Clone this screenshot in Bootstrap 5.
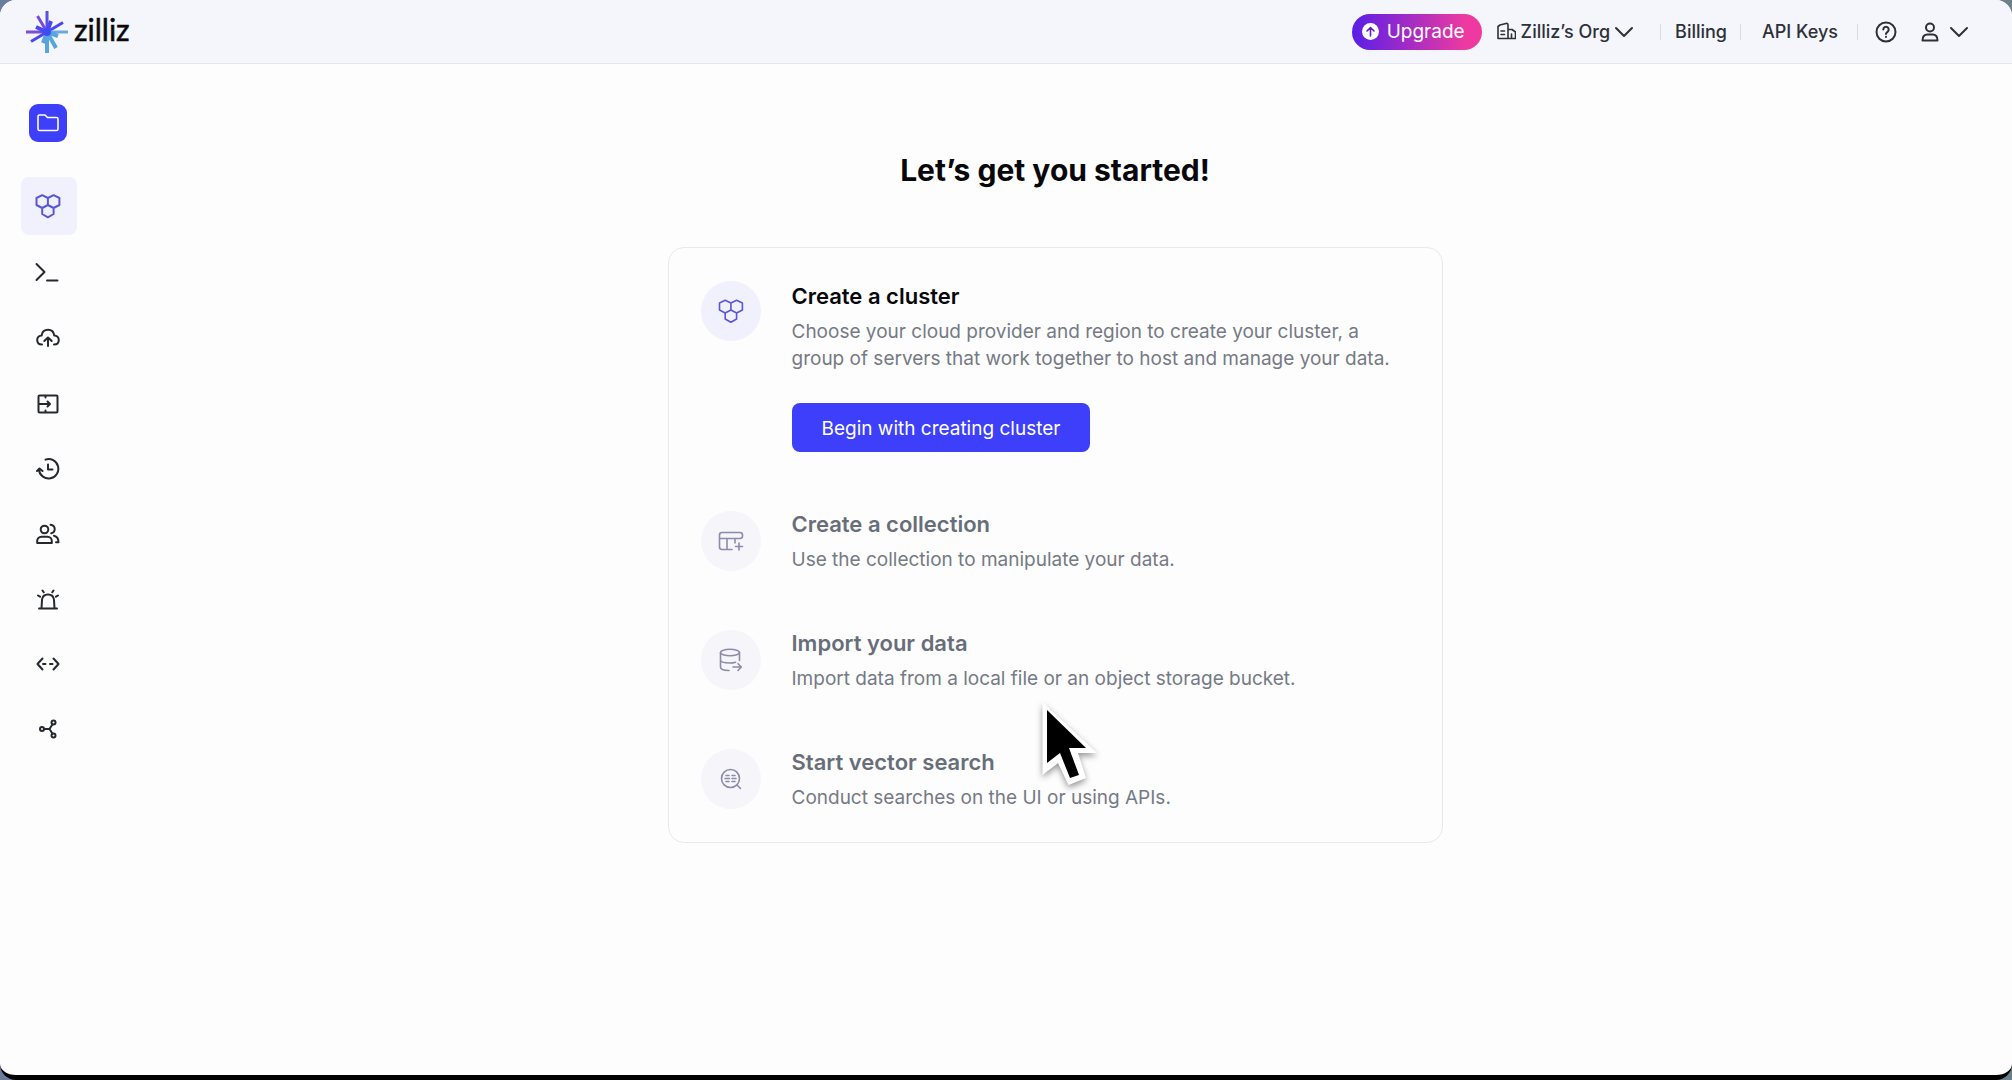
<!DOCTYPE html>
<html lang="en">
<head>
<meta charset="utf-8">
<meta name="viewport" content="width=device-width, initial-scale=1">
<title>Zilliz Cloud</title>
<link href="https://cdn.jsdelivr.net/npm/bootstrap@5.3.0/dist/css/bootstrap.min.css" rel="stylesheet">
<style>
  body { font-family: Inter, "Liberation Sans", sans-serif; background: linear-gradient(90deg, #6c7c9c, #6b8088); color: #2c3138; }
  .app-window { background: #fdfdfe; border-radius: 16px; border-bottom: 5px solid #000; overflow: hidden; }
  .topbar { height: 64px; background: #f5f6fb; border-bottom: 1px solid #e3e6ec; padding: 0 44px 0 26px; }
  .topbar svg, .side-link svg, .step-icon svg, .project-btn svg { fill: none; stroke: currentColor; stroke-width: 2; stroke-linecap: round; stroke-linejoin: round; flex: none; }
  .topbar svg.thin, .project-btn svg.thin, .step-icon svg { stroke-width: 1.6; }
  .brand { font: 400 30px/40px Lato, sans-serif; color: #0a0a0c; gap: 6px; }
  .brand-name { padding-bottom: 6px; -webkit-text-stroke: 0.5px #0a0a0c; }
  .upgrade { height: 36px; padding: 0 17px 0 10px; gap: 8px; font-size: 19px; line-height: 36px; background: linear-gradient(90deg, #5a1ee8, #ee3aa0 88%); }
  .top-link { font-size: 18px; line-height: 28px; font-weight: 500; color: #2c3138; }
  .org-link { margin-left: 15px; gap: 5px; }
  .divider { width: 1px; height: 16px; background: #d9dbe2; }
  .gap-org { margin: 0 14px 0 27px; }
  .gap-bill { margin: 0 21px 0 13px; }
  .gap-api { margin: 0 17px 0 19px; }
  .account { margin-left: 24px; gap: 11px; }
  .sidebar { width: 98px; padding: 40px 0 0 21px; }
  .project-btn { width: 38px; height: 38px; border-radius: 9px; background: #3d3ffb; margin: 0 0 35px 8px; }
  .side-link { width: 56px; height: 58px; border-radius: 8px; color: #25292f; padding-right: 2px; }
  .side-link.active { background: #f1f0fd; color: #5a57d6; }
  .list-a { gap: 8px; }
  .list-b { gap: 7px; margin-top: 7px; }
  .page-main { padding: 86px 24px 96px; }
  .page-title { font-size: 30px; line-height: 40px; font-weight: 700; color: #08080a; margin-bottom: 57px; }
  .steps { width: 100%; max-width: 775px; border: 1px solid #e8e9ee; border-radius: 16px; padding: 33px 32px 31px; gap: 55px; }
  .step { gap: 31px; }
  .step-icon { width: 60px; height: 60px; margin-top: 2px; background: #f5f5fa; color: #8d8aab; }
  .step-icon.current { margin-top: 0; background: #f1f0fd; color: #5a57d6; }
  .step-title { font-size: 22px; line-height: 30px; font-weight: 600; margin-bottom: 7px; color: #686e79; }
  .step-title.current { color: #08080a; }
  .step-text { font-size: 19px; line-height: 27px; color: #757a84; }
  .begin-btn { height: 49px; padding: 2px 30px 0; border-radius: 8px; margin: 31px 0 2px; background: #3d3ffb; color: #fff; font-size: 19px; line-height: 27px; }
  .begin-btn:hover { background: #3234e0; color: #fff; }
  .pointer { left: 371px; top: 453px; filter: drop-shadow(0 3px 3px rgba(0,0,0,.4)); pointer-events: none; }
</style>
<script src="https://cdn.jsdelivr.net/npm/bootstrap@5.3.0/dist/js/bootstrap.bundle.min.js"></script>
</head>
<body>
<svg class="d-none" aria-hidden="true">
  <symbol id="cluster" viewBox="0 0 26 26">
    <path d="M7.2 2.2 12.9 5v7L7.2 15 1.5 12V5zM18.6 2.2 24.4 5v7l-5.8 3-5.7-3V5zM7.2 15l5.7-3 5.700 3v6l-5.700 3.300L7.200 21z"/>
  </symbol>
</svg>
<div class="app-window min-vh-100 d-flex flex-column">
  <header class="topbar d-flex align-items-center">
    <a href="#" class="brand d-flex align-items-center text-decoration-none me-auto">
      <svg width="42" height="42" viewBox="0 0 42 42">
        <g stroke-width="3" stroke-linecap="butt">
          <path stroke="#5a4fe8" d="M21 21V0"/>
          <path stroke="#7d4bdc" d="M21 21 11.500 5M21 21H0"/>
          <path stroke="#4a49f0" d="M21 21 5 30.500M21 21l16-9.500"/>
          <path stroke="#4a49f0" stroke-width="4" d="M21 21l4-11M21 21 10 16"/>
          <path stroke="#6aa9dc" d="M21 21h21"/>
          <path stroke="#58a5dc" stroke-width="4" d="M21 21v21M21 21l9 16M21 21l-4 11M21 21l11 4"/>
        </g>
        <circle cx="21" cy="21" r="4" fill="#3f4cf5" stroke="none"/>
      </svg>
      <span class="brand-name">zilliz</span>
    </a>
    <button type="button" class="upgrade btn border-0 rounded-pill text-white d-flex align-items-center">
      <svg width="17" height="17" viewBox="0 0 17 17" class="thin"><circle cx="8.500" cy="8.500" r="8.500" fill="#fff" stroke="none"/><path stroke="#5a22c8" d="M8.500 13V4.500M5 8l3.500-3.500L12 8"/></svg>
      Upgrade
    </button>
    <button type="button" class="top-link org-link btn border-0 p-0 d-flex align-items-center">
      <svg width="19" height="19" viewBox="0 0 19 19" class="thin"><path d="M1 16.500V4.500L3 3l6-1.500q2-.5 2 1.500v13.500M1 16.500h17.500v-6.500L15 7.500h-4M4 9h3.500M4 12.500h3.500M14.500 12v4.500"/></svg>
      Zilliz’s Org
      <svg width="18" height="12" viewBox="0 0 18 12"><path d="M1 2l8 8 8-8"/></svg>
    </button>
    <span class="divider gap-org"></span>
    <a href="#" class="top-link text-decoration-none">Billing</a>
    <span class="divider gap-bill"></span>
    <a href="#" class="top-link text-decoration-none">API Keys</a>
    <span class="divider gap-api"></span>
    <button type="button" class="top-link btn border-0 p-0 d-flex" aria-label="Help">
      <svg width="22" height="22" viewBox="0 0 22 22"><circle cx="11" cy="11" r="9.500"/><path d="M8.300 8.500a2.700 2.700 0 1 1 4.200 2.300c-1 .7-1.500 1.200-1.500 2.200M11 15.800v.2"/></svg>
    </button>
    <button type="button" class="top-link btn border-0 p-0 d-flex align-items-center account" aria-label="Account">
      <svg width="18" height="20" viewBox="0 0 18 20"><circle cx="9" cy="5.500" r="4"/><path d="M1.500 18.500c0-4 2-6 5-6h5c3 0 5 2 5 6z"/></svg>
      <svg width="18" height="12" viewBox="0 0 18 12"><path d="M1 2l8 8 8-8"/></svg>
    </button>
  </header>
  <div class="d-flex flex-grow-1">
    <nav class="sidebar flex-shrink-0" aria-label="Project">
      <button type="button" class="project-btn btn border-0 p-0 text-white d-flex align-items-center justify-content-center" aria-label="Projects">
        <svg width="24" height="20" viewBox="0 0 24 20" class="thin"><path d="M2 3.500Q2 2 3.500 2H9l2.500 2.500h9Q22 4.500 22 6v10q0 1.500-1.500 1.500h-17Q2 17.500 2 16z"/></svg>
      </button>
      <div class="list-a d-flex flex-column">
        <a href="#" class="side-link active d-flex align-items-center justify-content-center" aria-label="Clusters" aria-current="page"><svg width="26" height="26"><use href="#cluster"/></svg></a>
        <a href="#" class="side-link d-flex align-items-center justify-content-center" aria-label="Console"><svg width="26" height="22" viewBox="0 0 26 22"><path d="M1.500 3l8 8-8 8M12 19.500h10.500"/></svg></a>
        <a href="#" class="side-link d-flex align-items-center justify-content-center" aria-label="Migrations"><svg width="24" height="20" viewBox="0 0 24 20"><path d="M6 16.500C3 16.500 1.200 14.600 1.200 12s2-4.600 4.500-4.600C6 4 8.500 1.800 12 1.800s5.800 2.200 6.200 5.600c2.600 0 4.600 2 4.600 4.600s-1.800 4.500-4.800 4.500M12 18V9.500M8.300 13 12 9.500l3.700 3.500"/></svg></a>
        <a href="#" class="side-link d-flex align-items-center justify-content-center" aria-label="Imports"><svg width="22" height="20" viewBox="0 0 22 20"><path d="M8.500 1.500v2M8.500 18.500v-2M2.500 1.500h17q1 0 1 1v15q0 1-1 1h-17q-1 0-1-1v-15q0-1 1-1zM1.500 10H13M10.500 7.500 13 10l-2.500 2.500"/></svg></a>
      </div>
      <div class="list-b d-flex flex-column">
        <a href="#" class="side-link d-flex align-items-center justify-content-center" aria-label="Backups"><svg width="24" height="22" viewBox="0 0 24 22"><path d="M9.500 1.600A9.700 9.700 0 1 1 3 12M1 13l2.500-2.500L6.500 13M12 6.500v5h4.500"/></svg></a>
        <a href="#" class="side-link d-flex align-items-center justify-content-center" aria-label="Users"><svg width="24" height="22" viewBox="0 0 24 22"><circle cx="8.500" cy="6.500" r="3.800"/><path d="M1.200 20v-2c0-2.500 1.800-4.300 4.300-4.300h6c2.500 0 4.300 1.800 4.300 4.300v2zM14.500 1.700c2.800.4 4.200 2 4.200 4.300s-1.200 3.800-3.500 4.300M18 12.700c3 .7 4.500 2.500 4.500 6.500H20"/></svg></a>
        <a href="#" class="side-link d-flex align-items-center justify-content-center" aria-label="Alerts"><svg width="22" height="21" viewBox="0 0 22 21"><path d="M2 19.500h18M4.500 19.500 5 11Q5.500 5.500 11 5.500t6 5.500l.5 8.500M5.500 1.500l1.200 1.800M16.500 1.500l-1.200 1.800M1 6.500l2 1.200M21 6.500l-2 1.200"/></svg></a>
        <a href="#" class="side-link d-flex align-items-center justify-content-center" aria-label="API"><svg width="24" height="14" viewBox="0 0 24 14"><path d="M6.500 1.500 1.500 7l5 5.500M17.500 1.500l5 5.500-5 5.500M7 7h2.500M14 7h2.500"/></svg></a>
        <a href="#" class="side-link d-flex align-items-center justify-content-center" aria-label="Integrations"><svg width="18" height="20" viewBox="0 0 18 20"><circle cx="3" cy="10" r="2"/><circle cx="14.500" cy="3.500" r="2"/><circle cx="14.500" cy="16.500" r="2"/><path d="M5 10h5.500l3-4.800M10.500 10l3 4.800"/></svg></a>
      </div>
    </nav>
    <main class="page-main flex-grow-1 d-flex flex-column align-items-center">
      <h1 class="page-title text-center">Let’s get you started!</h1>
      <section class="steps position-relative d-flex flex-column">
        <div class="step d-flex">
          <div class="step-icon current rounded-circle flex-shrink-0 d-flex align-items-center justify-content-center"><svg width="26" height="26"><use href="#cluster"/></svg></div>
          <div>
            <h2 class="step-title current">Create a cluster</h2>
            <p class="step-text mb-0">Choose your cloud provider and region to create your cluster, a group of servers that work together to host and manage your data.</p>
            <button type="button" class="begin-btn btn border-0">Begin with creating cluster</button>
          </div>
        </div>
        <div class="step d-flex">
          <div class="step-icon rounded-circle flex-shrink-0 d-flex align-items-center justify-content-center"><svg width="26" height="20" viewBox="0 0 26 20"><path d="M14 18.500H4q-2.500 0-2.500-2.500V4Q1.500 1.500 4 1.500h18q2.500 0 2.500 2.500v1q0 2.500-2.500 2.500H1.500M9 7.500v11M17 7.500V12M21 12v7M17.500 15.500h7"/></svg></div>
          <div>
            <h2 class="step-title">Create a collection</h2>
            <p class="step-text mb-0">Use the collection to manipulate your data.</p>
          </div>
        </div>
        <div class="step d-flex">
          <div class="step-icon rounded-circle flex-shrink-0 d-flex align-items-center justify-content-center"><svg width="24" height="24" viewBox="0 0 24 24"><ellipse cx="11" cy="4.500" rx="9.500" ry="3.300"/><path d="M1.500 4.500v14.500c0 2 3.500 3.500 8.500 3.500M20.500 4.500v8M1.500 12c0 1.800 4 3 9.500 3 3 0 4-.3 5.500-.8M14 19h8M19 15.700l3.300 3.300-3.300 3.500"/></svg></div>
          <div>
            <h2 class="step-title">Import your data</h2>
            <p class="step-text mb-0">Import data from a local file or an object storage bucket.</p>
          </div>
        </div>
        <div class="step d-flex">
          <div class="step-icon rounded-circle flex-shrink-0 d-flex align-items-center justify-content-center"><svg width="22" height="22" viewBox="0 0 22 22"><circle cx="10.500" cy="10.500" r="9"/><path d="M17 17l3.500 3.500M6 7.500h3M12 7.500h3M5 10.500h4.500M12 10.500h4M6 13.500h3M12 13.500h3"/></svg></div>
          <div>
            <h2 class="step-title">Start vector search</h2>
            <p class="step-text mb-0">Conduct searches on the UI or using APIs.</p>
          </div>
        </div>
        <svg class="pointer position-absolute" width="60" height="88" viewBox="0 0 60 88" aria-hidden="true">
          <path fill="#fff" d="M2.500 1 57 52H38l8 25-17.500 7L18 62 2.500 74z"/>
          <path fill="#000" d="M7 9 46 47H29l10 27-9 3-10-25L7 62z"/>
        </svg>
      </section>
    </main>
  </div>
</div>
</body>
</html>
